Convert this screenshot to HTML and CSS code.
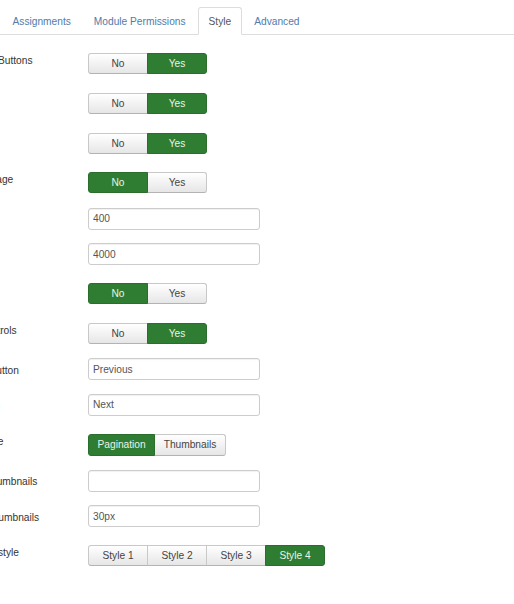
FILE: index.html
```html
<!DOCTYPE html>
<html lang="en">

<head>
    <meta charset="UTF-8">
    <meta name="viewport" content="width=device-width, initial-scale=1.0">
    <title>Module Style</title>

    <link rel="stylesheet" href="styles.css">
</head>

<body>
    <nav class="tabs">
        <a href="#" class="tab">Assignments</a>
        <a href="#" class="tab">Module Permissions</a>
        <a href="#" class="tab active">Style</a>
        <a href="#" class="tab">Advanced</a>
    </nav>

    <main class="form">
        <div class="row toggle-row">
            <label class="label">Navigation Buttons</label>
            <div class="group">
                <button class="btn">No</button>
                <button class="btn on">Yes</button>
            </div>
        </div>
        <div class="row toggle-row">
            <label class="label">Autoplay</label>
            <div class="group">
                <button class="btn">No</button>
                <button class="btn on">Yes</button>
            </div>
        </div>
        <div class="row toggle-row">
            <label class="label">Captions</label>
            <div class="group">
                <button class="btn">No</button>
                <button class="btn on">Yes</button>
            </div>
        </div>
        <div class="row toggle-row">
            <label class="label">Preload Image</label>
            <div class="group">
                <button class="btn on">No</button>
                <button class="btn">Yes</button>
            </div>
        </div>
        <div class="row">
            <label class="label">Speed</label>
            <input class="input" type="text" value="400">
        </div>
        <div class="row">
            <label class="label">Interval</label>
            <input class="input" type="text" value="4000">
        </div>
        <div class="row toggle-row">
            <label class="label">Loop</label>
            <div class="group">
                <button class="btn on">No</button>
                <button class="btn">Yes</button>
            </div>
        </div>
        <div class="row toggle-row">
            <label class="label">Player Controls</label>
            <div class="group">
                <button class="btn">No</button>
                <button class="btn on">Yes</button>
            </div>
        </div>
        <div class="row">
            <label class="label">Previous Button</label>
            <input class="input" type="text" value="Previous">
        </div>
        <div class="row">
            <label class="label">Next Button</label>
            <input class="input" type="text" value="Next">
        </div>
        <div class="row toggle-row">
            <label class="label">Paging Type</label>
            <div class="group tall">
                <button class="btn auto on">Pagination</button>
                <button class="btn auto">Thumbnails</button>
            </div>
        </div>
        <div class="row">
            <label class="label">Custom Thumbnails</label>
            <input class="input" type="text" value="">
        </div>
        <div class="row">
            <label class="label">Spacing Thumbnails</label>
            <input class="input" type="text" value="30px">
        </div>
        <div class="row toggle-row">
            <label class="label">Navigation style</label>
            <div class="group">
                <button class="btn">Style 1</button>
                <button class="btn">Style 2</button>
                <button class="btn">Style 3</button>
                <button class="btn on">Style 4</button>
            </div>
        </div>
    </main>
</body>

</html>
```

FILE: styles.css
```css
* {
    padding: 0;
    margin: 0;
    box-sizing: border-box;
    font-family: "Liberation Sans", Arial, sans-serif;
    font-size: 10.2px;
}

body {
    background-color: white;
    color: #333;
    padding-top: 7px;
    overflow: hidden;
}

.tabs {
    display: flex;
    border-bottom: 1px solid #ddd;
    padding-left: 2px;
    height: 28px;
}

.tabs .tab {
    display: block;
    padding: 7px 9.5px 5px;
    line-height: 14px;
    height: 28px;
    margin-right: 2px;
    border: 1px solid transparent;
    border-radius: 3px 3px 0 0;
    color: #4f7cab;
    text-decoration: none;
}

.tabs .tab.active {
    background-color: white;
    color: #555;
    border-color: #ddd;
    border-bottom-color: white;
}

.form {
    margin-left: -53px;
    padding-top: 13.5px;
}

.row {
    display: flex;
    align-items: flex-start;
    margin-bottom: 13.5px;
}

.label {
    flex: none;
    width: 141px;
    padding-top: 5.5px;
    line-height: 14px;
    white-space: nowrap;
    overflow: hidden;
    color: #333;
}

.toggle-row .group {
    margin: 4.5px 0 0.75px;
}

.group {
    display: flex;
    height: 21px;
}

.group.tall {
    height: 22px;
}

.btn {
    width: 60px;
    height: 100%;
    border: 1px solid #c8c8c8;
    border-bottom-color: #b3b3b3;
    background: linear-gradient(#ffffff, #e6e6e6);
    color: #444;
    text-align: center;
    line-height: 19px;
    cursor: pointer;
}

.btn.auto {
    width: auto;
    padding: 0 8.5px;
}

.btn + .btn {
    margin-left: -1px;
}

.btn:first-child {
    border-radius: 3px 0 0 3px;
}

.btn:last-child {
    border-radius: 0 3px 3px 0;
}

.btn.on {
    background: #2e7d32;
    border-color: #2a6d2d;
    color: #eaf3e8;
    position: relative;
}

.input {
    width: 172px;
    height: 22px;
    border: 1px solid #ccc;
    border-radius: 3px;
    padding: 0 4px;
    color: #555;
    background-color: white;
    box-shadow: inset 0 1px 1px rgba(0, 0, 0, 0.06);
}
```
